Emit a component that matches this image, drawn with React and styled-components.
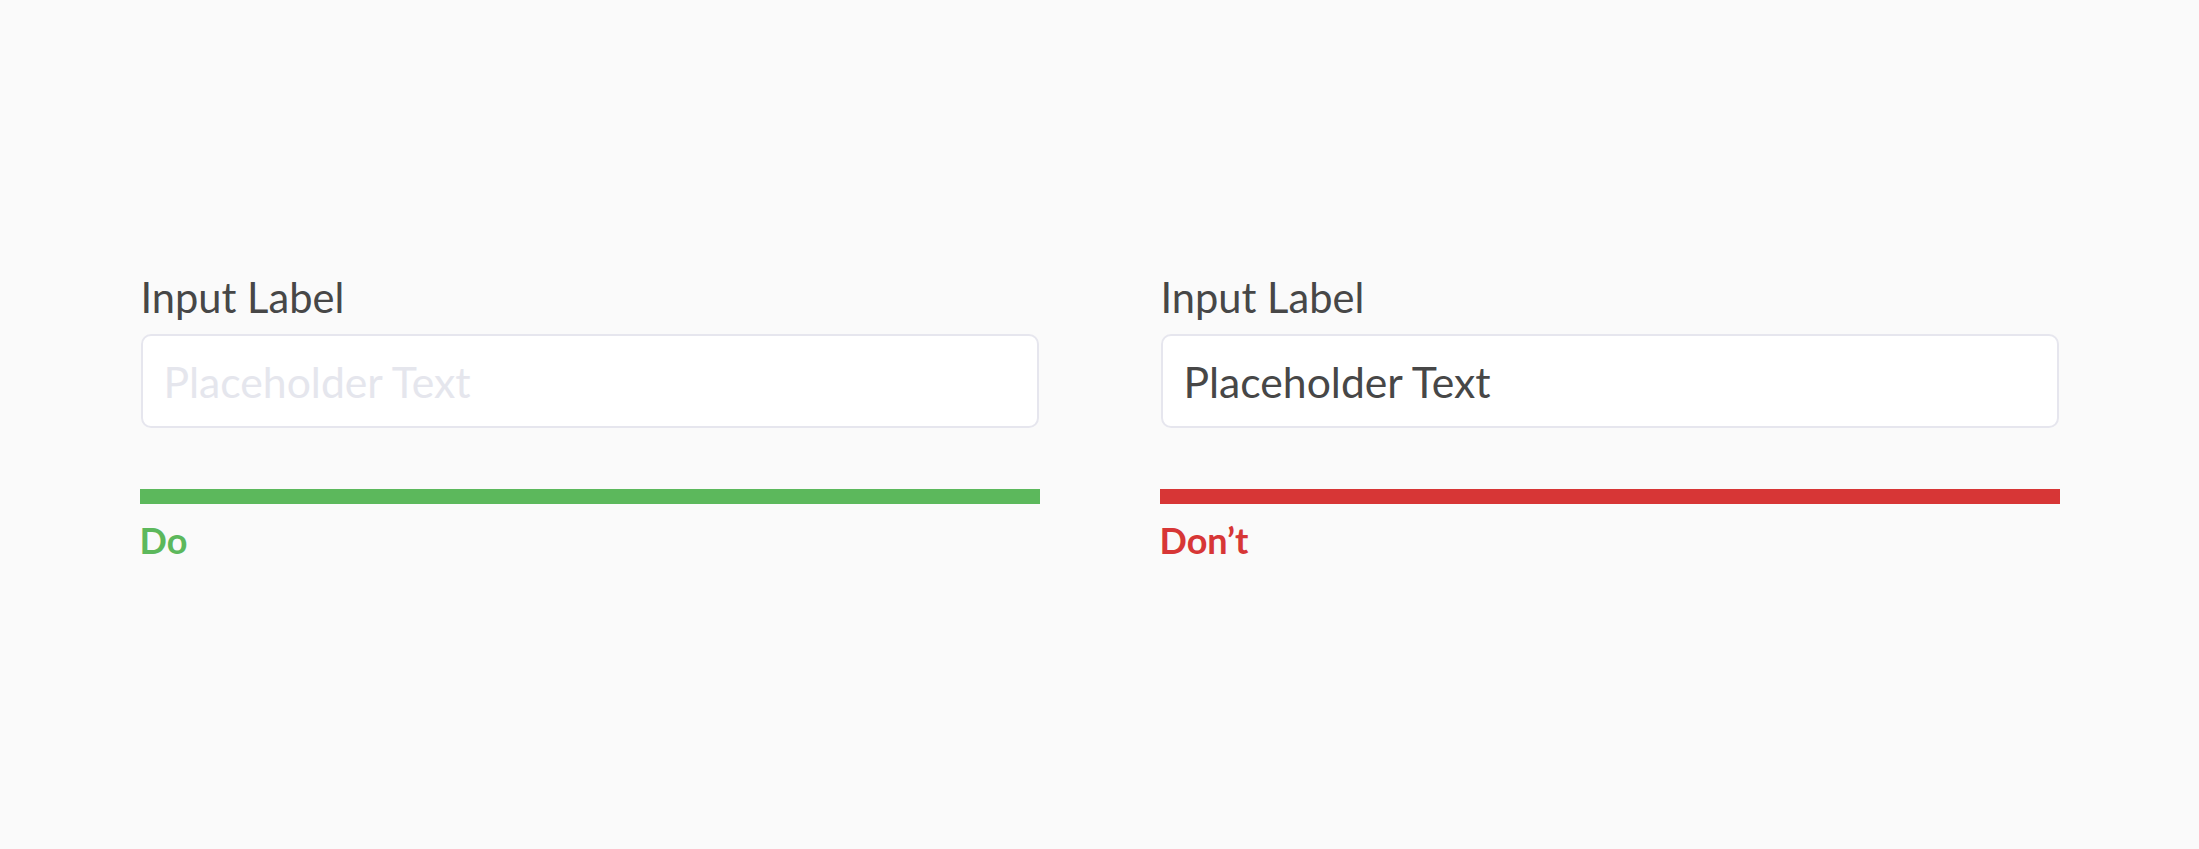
import styled, { createGlobalStyle } from "styled-components"

const GlobalStyle = createGlobalStyle`
    html, body {
        margin: 0;
        padding: 0;
        background: #fafafa;
        font-family: Lato, "Noto Sans", sans-serif;
    }
`

const Page = styled.div`
    width: 100%;
    min-height: 100vh;
    box-sizing: border-box;
    padding-top: 272px;
    display: flex;
    justify-content: center;
`

const Columns = styled.div`
    width: 1920px;
    display: grid;
    grid-template-columns: 900px 900px;
    column-gap: 120px;
`

const Column = styled.div`
    display: flex;
    flex-direction: column;
`

const Label = styled.label`
    font-size: 41.6px;
    line-height: 50px;
    color: #474747;
    margin-left: 1px;
`

const Field = styled.input`
    margin: 12px 1px 0;
    width: calc(100% - 2px);
    height: 94px;
    box-sizing: border-box;
    padding: 0 21px;
    border: 2px solid #e6e6ee;
    border-radius: 10px;
    background: #ffffff;
    font-family: Lato, "Noto Sans", sans-serif;
    font-size: 42.7px;
    line-height: 52px;
    color: #474747;
    outline: none;

    &::placeholder {
        color: #e5e6ed;
        opacity: 1;
    }
`

const Bar = styled.div`
    margin-top: 61px;
    height: 15px;
    width: 100%;
    background: ${(p) => p.color};
`

const Verdict = styled.div`
    margin-top: 14px;
    font-size: 36px;
    line-height: 44px;
    font-weight: 700;
    color: ${(p) => p.color};
`

const GOOD = "#5cb85c"
const BAD = "#d73636"

export default function App() {
    return <>
        <GlobalStyle />
        <Page>
            <Columns>
                <Column>
                    <Label>Input Label</Label>
                    <Field placeholder="Placeholder Text" readOnly />
                    <Bar color={GOOD} />
                    <Verdict color={GOOD}>Do</Verdict>
                </Column>
                <Column>
                    <Label>Input Label</Label>
                    <Field defaultValue="Placeholder Text" readOnly />
                    <Bar color={BAD} />
                    <Verdict color={BAD}>Don’t</Verdict>
                </Column>
            </Columns>
        </Page>
    </>
}
